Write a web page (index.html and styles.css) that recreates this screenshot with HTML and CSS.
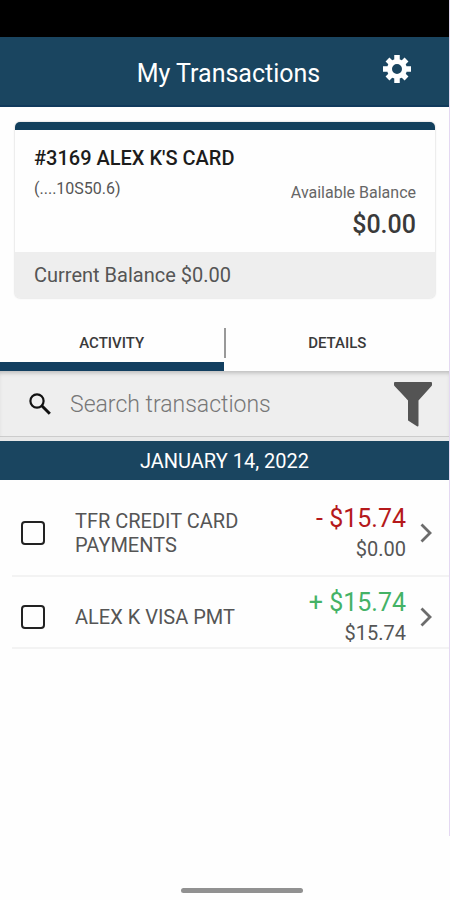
FILE: index.html
```html
<!DOCTYPE html>
<html lang="en">
<head>
  <meta charset="UTF-8">
  <meta name="viewport" content="width=device-width, initial-scale=1">
  <title>My Transactions</title>
  <link rel="stylesheet" href="styles.css">
</head>
<body>
  <div class="screen">
    <div class="status-bar"></div>

    <header class="header">
      <h1>My Transactions</h1>
      <button class="icon-btn" type="button" aria-label="Settings">
        <svg width="28" height="28" viewBox="0 0 28 28" fill="none" stroke="#fff">
          <circle cx="14" cy="14" r="7.5" stroke-width="5"/>
          <path stroke-width="5.5" d="M14 0v6M14 22v6M0 14h6M22 14h6M4.500 4.500l4 4M19.500 19.500l4 4M4.500 23.500l4-4M19.500 8.500l4-4"/>
        </svg>
      </button>
    </header>

    <section class="card">
      <div class="card-body">
        <h2>#3169 ALEX K'S CARD</h2>
        <p class="card-number">(....10S50.6)</p>
        <div class="available">
          <p class="available-label">Available Balance</p>
          <p class="available-amount">$0.00</p>
        </div>
      </div>
      <p class="card-footer">Current Balance $0.00</p>
    </section>

    <nav class="tabs">
      <button class="tab active" type="button">ACTIVITY</button>
      <span class="divider"></span>
      <button class="tab" type="button">DETAILS</button>
    </nav>

    <form class="search">
      <label for="search">
        <svg width="22" height="22" viewBox="0 0 22 22" fill="none" stroke="#111" stroke-width="2.2">
          <circle cx="8" cy="8" r="6.6"/>
          <path d="M12.8 12.8l8 8" stroke-width="3"/>
        </svg>
      </label>
      <input type="text" id="search" placeholder="Search transactions" aria-label="Search transactions">
      <button class="icon-btn" type="button" aria-label="Filter">
        <svg width="40" height="46" viewBox="0 0 40 46">
          <path fill="#545454" stroke="#545454" stroke-width="2" stroke-linejoin="round" d="M2 2h36v2L24.500 19V44.500L16 39V19L2 4z"/>
        </svg>
      </button>
    </form>

    <h3 class="date">JANUARY 14, 2022</h3>

    <ul class="list">
      <li class="item first">
        <input type="checkbox" id="t1">
        <label for="t1">TFR CREDIT CARD PAYMENTS</label>
        <div class="amounts">
          <p class="amount debit">- $15.74</p>
          <p class="balance">$0.00</p>
        </div>
        <a href="#" aria-label="Open transaction">
          <svg width="12" height="20" viewBox="0 0 12 20" fill="none" stroke="#6c6c6c" stroke-width="2.800"><path d="M1.500 1.500L10 10L1.500 18.500"/></svg>
        </a>
      </li>
      <li class="item">
        <input type="checkbox" id="t2">
        <label for="t2">ALEX K VISA PMT</label>
        <div class="amounts">
          <p class="amount credit">+ $15.74</p>
          <p class="balance">$15.74</p>
        </div>
        <a href="#" aria-label="Open transaction">
          <svg width="12" height="20" viewBox="0 0 12 20" fill="none" stroke="#6c6c6c" stroke-width="2.800"><path d="M1.500 1.500L10 10L1.500 18.500"/></svg>
        </a>
      </li>
    </ul>
  </div>

  <footer class="nav-bar"><span class="home"></span></footer>
</body>
</html>
```

FILE: styles.css
```css
* {
  box-sizing: border-box;
}

body {
  margin: 0;
  min-height: 100vh;
  display: flex;
  flex-direction: column;
  background: #fefefe;
  color: #555;
  font-family: Roboto, "Liberation Sans", sans-serif;
}

h1, h2, h3, p, ul {
  margin: 0;
  padding: 0;
}

button {
  font-family: inherit;
  border: none;
  background: none;
  padding: 0;
  cursor: pointer;
}

svg {
  display: block;
}

.screen {
  flex: 1;
  border-right: 1px solid #e4d8f2;
}

.status-bar {
  height: 37px;
  background: #000;
}

.header {
  display: grid;
  grid-template-columns: 64px 1fr 64px;
  align-items: center;
  height: 70px;
  padding: 4px 2px 0 10px;
  background: #1a4560;
  border-bottom: 2px solid #113a5c;
  color: #fff;
}

.header h1 {
  grid-column: 2;
  text-align: center;
  font-size: 25px;
  font-weight: 400;
}

.header .icon-btn {
  justify-self: start;
  padding: 0 0 8px;
}

.card {
  margin: 15px 14px 0 15px;
  border-top: 8px solid #123f5c;
  border-radius: 5px;
  box-shadow: 0 0 2px rgba(0, 0, 0, 0.25);
  overflow: hidden;
}

.card-body {
  padding: 16px 19px 11px;
}

.card h2 {
  color: #1c1c1c;
  font-size: 20px;
  line-height: 24px;
  font-weight: 500;
}

.card-number {
  margin-top: 9px;
  font-size: 16px;
  line-height: 20px;
}

.available {
  margin-top: -16px;
  text-align: right;
}

.available-label {
  color: #666;
  font-size: 16px;
  line-height: 20px;
}

.available-amount {
  margin-top: 6px;
  color: #3a3a3a;
  font-size: 25px;
  line-height: 32px;
  font-weight: 500;
}

.card-footer {
  padding: 11px 19px;
  background: #eee;
  font-size: 20px;
  line-height: 24px;
}

.tabs {
  display: flex;
  align-items: center;
  height: 57px;
  margin-top: 16px;
}

.tab {
  flex: 1;
  height: 100%;
  padding-top: 10px;
  border-bottom: 9px solid transparent;
  color: #3a3a3a;
  font-size: 15px;
  font-weight: 500;
}

.tab.active {
  border-bottom-color: #123f60;
}

.divider {
  width: 2px;
  height: 30px;
  background: #999;
}

.search {
  display: flex;
  align-items: center;
  height: 70px;
  padding: 0 16px 0 29px;
  background: #eee;
  border-bottom: 4px solid #e8e8e8;
  box-shadow: inset 0 4px 4px -2px #bbb, inset 0 -1px #ccc;
}

.search input {
  flex: 1;
  min-width: 0;
  margin-left: 19px;
  padding: 0;
  border: none;
  outline: none;
  background: none;
  font-family: inherit;
  font-size: 23px;
  font-weight: 300;
}

.search input::placeholder {
  color: #777;
}

.date {
  height: 39px;
  background: #1a4560;
  color: #fff;
  text-align: center;
  font-size: 20px;
  line-height: 40px;
  font-weight: 400;
}

.list {
  list-style: none;
  padding-left: 12px;
}

.item {
  display: flex;
  align-items: center;
  height: 72px;
  padding: 9px 17px 0 9px;
  border-bottom: 2px solid #f3f3f3;
}

.item.first {
  height: 97px;
  padding-top: 10px;
}

.item input {
  appearance: none;
  width: 24px;
  height: 24px;
  margin: 0;
  border: 2px solid #222;
  border-radius: 4px;
}

.item input:checked {
  background: #1a4560;
}

.item label {
  flex: 1;
  padding: 0 40px 0 30px;
  font-size: 20px;
  line-height: 24px;
}

.amounts {
  text-align: right;
}

.amount {
  font-size: 25px;
  line-height: 32px;
}

.debit {
  color: #b5191b;
}

.credit {
  color: #44b266;
}

.balance {
  font-size: 20px;
  line-height: 28px;
}

.item a {
  margin-left: 14px;
}

.nav-bar {
  display: flex;
  justify-content: center;
  height: 64px;
  padding: 52px 0 0 34px;
}

.home {
  width: 122px;
  height: 5px;
  border-radius: 3px;
  background: #919191;
}
```
